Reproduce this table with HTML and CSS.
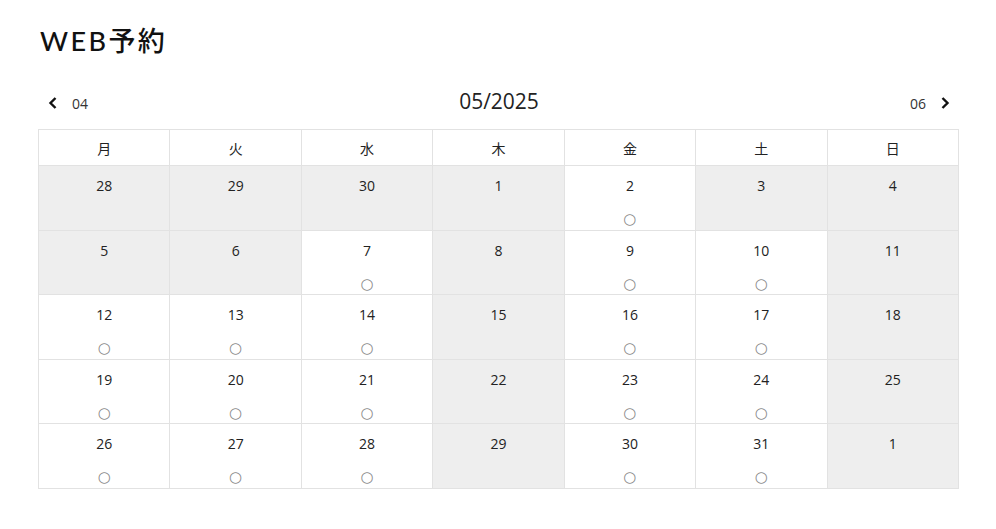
FILE: index.html
```html
<!DOCTYPE html>
<html lang="ja">
<head>
<meta charset="utf-8">
<link rel="stylesheet" href="styles.css">
</head>
<body>
<div class="page">
  <h1 class="title">WEB予約</h1>
  <div class="nav">
    <a class="nav-link prev"><svg width="10" height="14" viewBox="0 0 10 14"><path d="M7.5 2 L2.5 7 L7.5 12" fill="none" stroke="#111" stroke-width="2.4"/></svg><span>04</span></a>
    <div class="month">05/2025</div>
    <a class="nav-link next"><span>06</span><svg width="10" height="14" viewBox="0 0 10 14"><path d="M2.5 2 L7.5 7 L2.5 12" fill="none" stroke="#111" stroke-width="2.4"/></svg></a>
  </div>
  <table class="cal">
    <thead>
      <tr><th>月</th><th>火</th><th>水</th><th>木</th><th>金</th><th>土</th><th>日</th></tr>
    </thead>
    <tbody>
      <tr>
        <td class="off"><span class="d">28</span></td>
        <td class="off"><span class="d">29</span></td>
        <td class="off"><span class="d">30</span></td>
        <td class="off"><span class="d">1</span></td>
        <td><span class="d">2</span><span class="m">○</span></td>
        <td class="off"><span class="d">3</span></td>
        <td class="off"><span class="d">4</span></td>
      </tr>
      <tr>
        <td class="off"><span class="d">5</span></td>
        <td class="off"><span class="d">6</span></td>
        <td><span class="d">7</span><span class="m">○</span></td>
        <td class="off"><span class="d">8</span></td>
        <td><span class="d">9</span><span class="m">○</span></td>
        <td><span class="d">10</span><span class="m">○</span></td>
        <td class="off"><span class="d">11</span></td>
      </tr>
      <tr>
        <td><span class="d">12</span><span class="m">○</span></td>
        <td><span class="d">13</span><span class="m">○</span></td>
        <td><span class="d">14</span><span class="m">○</span></td>
        <td class="off"><span class="d">15</span></td>
        <td><span class="d">16</span><span class="m">○</span></td>
        <td><span class="d">17</span><span class="m">○</span></td>
        <td class="off"><span class="d">18</span></td>
      </tr>
      <tr>
        <td><span class="d">19</span><span class="m">○</span></td>
        <td><span class="d">20</span><span class="m">○</span></td>
        <td><span class="d">21</span><span class="m">○</span></td>
        <td class="off"><span class="d">22</span></td>
        <td><span class="d">23</span><span class="m">○</span></td>
        <td><span class="d">24</span><span class="m">○</span></td>
        <td class="off"><span class="d">25</span></td>
      </tr>
      <tr>
        <td><span class="d">26</span><span class="m">○</span></td>
        <td><span class="d">27</span><span class="m">○</span></td>
        <td><span class="d">28</span><span class="m">○</span></td>
        <td class="off"><span class="d">29</span></td>
        <td><span class="d">30</span><span class="m">○</span></td>
        <td><span class="d">31</span><span class="m">○</span></td>
        <td class="off"><span class="d">1</span></td>
      </tr>
    </tbody>
  </table>
</div>
</body>
</html>
```

FILE: styles.css
```css
html, body {
  margin: 0;
  padding: 0;
  background: #fff;
}
body {
  font-family: "Open Sans", "Noto Sans CJK JP", sans-serif;
  color: #333;
}
.page {
  padding: 24px 38px 0 38px;
}
.title {
  margin: 0 0 0 2px;
  font-family: "Lato", "Noto Sans CJK JP", sans-serif;
  font-weight: 500;
  font-size: 27px;
  line-height: 34px;
  letter-spacing: 2.4px;
  color: #111;
}
.nav {
  margin-top: 26px;
  display: flex;
  align-items: center;
  justify-content: space-between;
  height: 34px;
  padding: 0 8px 0 10px;
}
.nav-link {
  display: flex;
  align-items: center;
  gap: 14px;
  font-size: 14px;
  color: #333;
  padding-top: 4px;
}
.nav-link svg { display: block; }
.month {
  font-size: 21px;
  color: #222;
}
.cal {
  margin-top: 11px;
  width: 921px;
  border-collapse: collapse;
  table-layout: fixed;
}
.cal th, .cal td {
  border: 1px solid #e2e2e2;
  text-align: center;
}
.cal th {
  height: 35px;
  font-family: "Noto Sans CJK JP", sans-serif;
  font-weight: 400;
  font-size: 14px;
  color: #222;
  padding: 0;
}
.cal td {
  height: 64.6px;
  vertical-align: top;
  padding: 9px 0 0 0;
  box-sizing: border-box;
}
.cal td.off {
  background: #eeeeee;
}
.d {
  display: block;
  font-size: 14px;
  line-height: 22px;
  color: #222;
}
.m {
  display: block;
  margin-top: 14px;
  font-family: "DejaVu Sans", sans-serif;
  font-size: 15px;
  line-height: 16px;
  color: #888;
}
```
